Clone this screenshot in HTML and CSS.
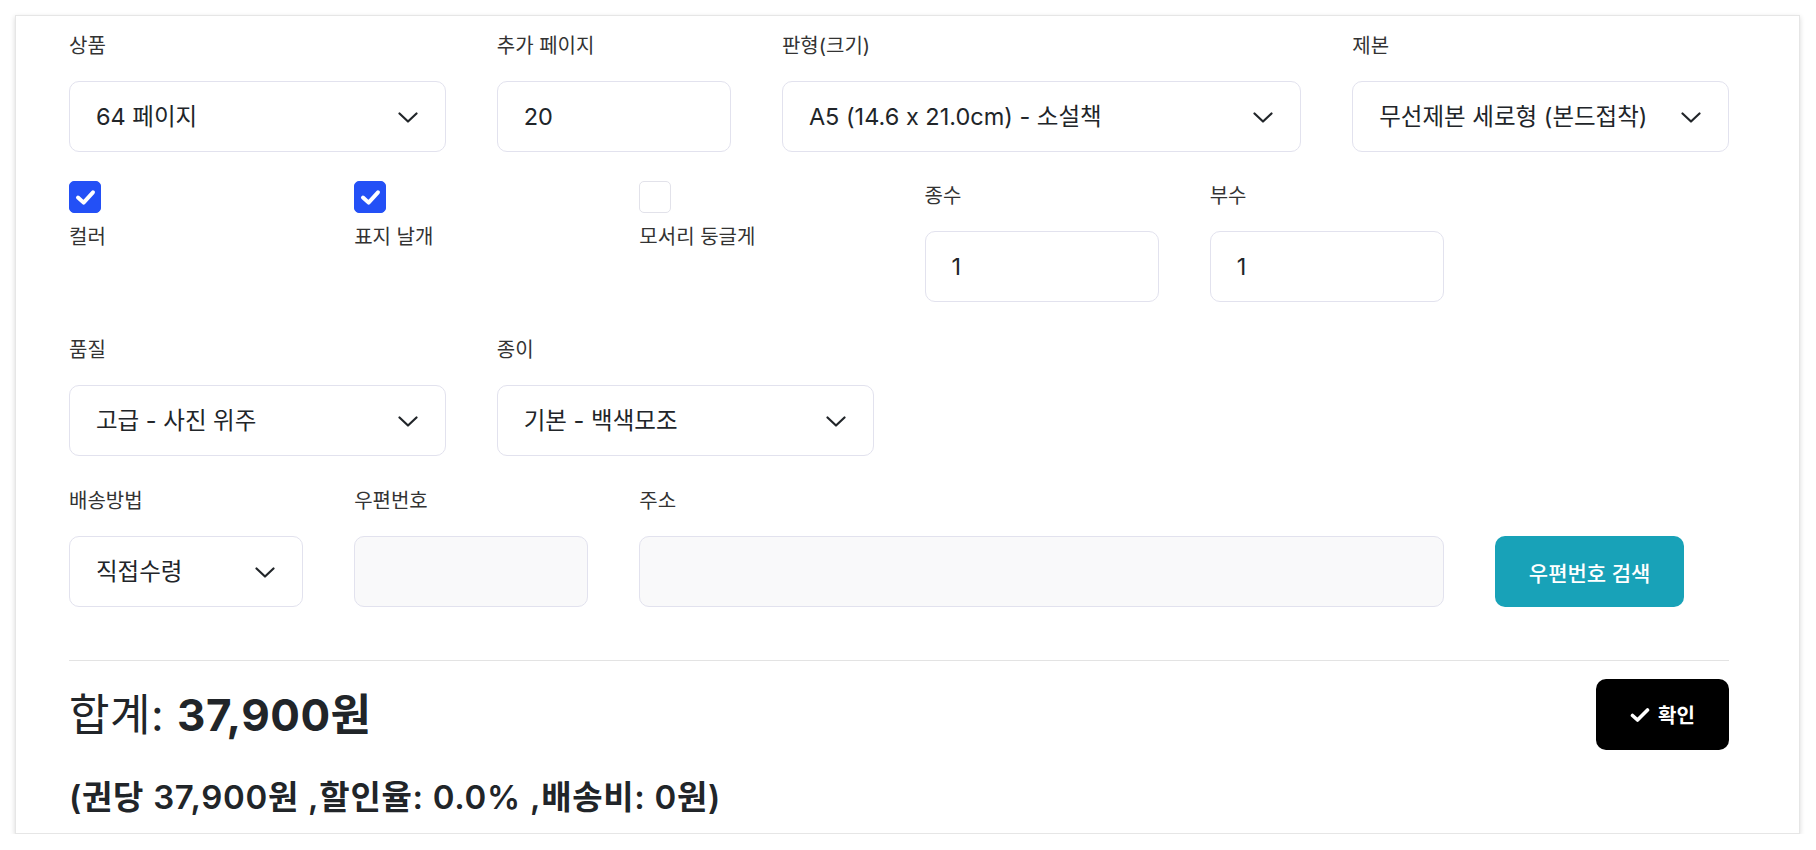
FILE: index.html
```html
<!DOCTYPE html>
<html lang="ko">
<head>
  <meta charset="UTF-8">
  <meta name="viewport" content="width=device-width, initial-scale=1.0">
  <title>책 인쇄 견적</title>
  <link rel="stylesheet" href="styles.css">
</head>
<body>
  <div class="card">
    <div class="form-row row-top">
      <div class="field span-3">
        <label class="field-label">상품</label>
        <div class="select-wrap">
          <select class="control"><option>64 페이지</option></select>
          <svg class="chevron" viewBox="0 0 20 11"><polyline points="1.5,1.5 10,9.5 18.5,1.5"/></svg>
        </div>
      </div>
      <div class="field span-2">
        <label class="field-label">추가 페이지</label>
        <input class="control" type="text" value="20">
      </div>
      <div class="field span-4">
        <label class="field-label">판형(크기)</label>
        <div class="select-wrap">
          <select class="control"><option>A5 (14.6 x 21.0cm) - 소설책</option></select>
          <svg class="chevron" viewBox="0 0 20 11"><polyline points="1.5,1.5 10,9.5 18.5,1.5"/></svg>
        </div>
      </div>
      <div class="field span-3">
        <label class="field-label">제본</label>
        <div class="select-wrap">
          <select class="control"><option>무선제본 세로형 (본드접착)</option></select>
          <svg class="chevron" viewBox="0 0 20 11"><polyline points="1.5,1.5 10,9.5 18.5,1.5"/></svg>
        </div>
      </div>
    </div>

    <div class="form-row row-options">
      <label class="check-field span-2">
        <span class="check on"><svg viewBox="0 0 32 32"><polyline points="8.5,16.5 14.5,22 24.5,11"/></svg></span>
        <span class="check-label">컬러</span>
      </label>
      <label class="check-field span-2">
        <span class="check on"><svg viewBox="0 0 32 32"><polyline points="8.5,16.5 14.5,22 24.5,11"/></svg></span>
        <span class="check-label">표지 날개</span>
      </label>
      <label class="check-field span-2">
        <span class="check"></span>
        <span class="check-label">모서리 둥글게</span>
      </label>
      <div class="field span-2">
        <label class="field-label">종수</label>
        <input class="control" type="text" value="1">
      </div>
      <div class="field span-2">
        <label class="field-label">부수</label>
        <input class="control" type="text" value="1">
      </div>
    </div>

    <div class="form-row row-paper">
      <div class="field span-3">
        <label class="field-label">품질</label>
        <div class="select-wrap">
          <select class="control"><option>고급 - 사진 위주</option></select>
          <svg class="chevron" viewBox="0 0 20 11"><polyline points="1.5,1.5 10,9.5 18.5,1.5"/></svg>
        </div>
      </div>
      <div class="field span-3">
        <label class="field-label">종이</label>
        <div class="select-wrap">
          <select class="control"><option>기본 - 백색모조</option></select>
          <svg class="chevron" viewBox="0 0 20 11"><polyline points="1.5,1.5 10,9.5 18.5,1.5"/></svg>
        </div>
      </div>
    </div>

    <div class="form-row row-delivery">
      <div class="field span-2">
        <label class="field-label">배송방법</label>
        <div class="select-wrap">
          <select class="control"><option>직접수령</option></select>
          <svg class="chevron" viewBox="0 0 20 11"><polyline points="1.5,1.5 10,9.5 18.5,1.5"/></svg>
        </div>
      </div>
      <div class="field span-2">
        <label class="field-label">우편번호</label>
        <input class="control" type="text" disabled>
      </div>
      <div class="field span-6">
        <label class="field-label">주소</label>
        <input class="control" type="text" disabled>
      </div>
      <div class="field span-2 field-action">
        <button class="search-btn">우편번호 검색</button>
      </div>
    </div>

    <hr class="divider">

    <div class="total-row">
      <h2 class="total">합계: <strong>37,900원</strong></h2>
      <button class="confirm-btn">
        <svg viewBox="0 0 20 16"><polyline points="2.5,8.5 7.5,13 17.5,3"/></svg>
        확인
      </button>
    </div>
    <p class="breakdown">(권당 37,900원 ,할인율: 0.0% ,배송비: 0원)</p>
  </div>
</body>
</html>
```

FILE: styles.css
```css
body {
  margin: 0;
  background: #fff;
  font-family: Inter, "Noto Sans CJK KR", sans-serif;
  font-feature-settings: "calt" 0;
  color: #212529;
}
.card {
  box-sizing: border-box;
  width: 1785px;
  height: 819px;
  margin: 15px 0 0 15px;
  padding: 15px 70px 16px 53px;
  border: 1px solid #e6e6e6;
  background: #fff;
  box-shadow: 0 2px 5px rgba(0,0,0,0.16);
}
.form-row {
  display: grid;
  grid-template-columns: repeat(12, 1fr);
  column-gap: 51px;
}
.row-top {
  margin-bottom: 29px;
}
.row-options {
  margin-bottom: 33px;
}
.row-paper {
  margin-bottom: 30px;
}
.span-2 { grid-column: span 2; }
.span-3 { grid-column: span 3; }
.span-4 { grid-column: span 4; }
.span-6 { grid-column: span 6; }

.field {
  display: flex;
  flex-direction: column;
}
.field-label {
  font-size: 20px;
  line-height: 30px;
  margin-bottom: 20px;
  color: #333;
}
.control {
  box-sizing: border-box;
  width: 100%;
  height: 71px;
  padding: 0 26px;
  border: 1px solid #e2e2ee;
  border-radius: 10px;
  background: #fff;
  font-family: inherit;
  font-feature-settings: "calt" 0;
  font-size: 23.5px;
  color: #212529;
  outline: none;
}
.control:disabled {
  background: #f9f9fa;
}
select.control {
  appearance: none;
  -webkit-appearance: none;
  padding-right: 60px;
}
.select-wrap {
  position: relative;
}
.chevron {
  position: absolute;
  right: 28px;
  top: 50%;
  width: 20px;
  height: 11px;
  margin-top: -5px;
  fill: none;
  stroke: #212529;
  stroke-width: 2.2;
  stroke-linecap: round;
  stroke-linejoin: round;
  pointer-events: none;
}

.check-field {
  display: flex;
  flex-direction: column;
  align-items: flex-start;
}
.check {
  box-sizing: border-box;
  width: 32px;
  height: 32px;
  border: 1px solid #e2e2ea;
  border-radius: 5px;
  background: #fff;
}
.check.on {
  background: #2350f6;
  border-color: #2350f6;
}
.check svg {
  display: block;
  width: 30px;
  height: 30px;
  fill: none;
  stroke: #fff;
  stroke-width: 4.2;
  stroke-linecap: round;
  stroke-linejoin: round;
}
.check-label {
  margin-top: 9px;
  font-size: 20px;
  line-height: 30px;
  color: #333;
}

.field-action {
  justify-content: flex-end;
  align-items: flex-start;
}
.search-btn {
  height: 71px;
  padding: 0 34px;
  border: none;
  border-radius: 10px;
  background: #18a2b8;
  color: #fff;
  font-family: inherit;
  font-size: 21px;
  font-weight: 500;
  cursor: pointer;
}

.divider {
  margin: 53px 0 0;
  border: none;
  border-top: 1px solid #e3e3e3;
}
.total-row {
  display: flex;
  justify-content: space-between;
  align-items: center;
  padding-top: 18px;
}
.total {
  margin: 0;
  font-size: 44px;
  font-weight: 400;
  letter-spacing: 0.5px;
  line-height: 50px;
  color: #212529;
}
.total strong {
  font-weight: 700;
}
.confirm-btn {
  display: flex;
  align-items: center;
  justify-content: center;
  gap: 8px;
  width: 133px;
  height: 71px;
  border: none;
  border-radius: 10px;
  background: #000;
  color: #fff;
  font-family: inherit;
  font-size: 20px;
  font-weight: 600;
  cursor: pointer;
}
.confirm-btn svg {
  width: 20px;
  height: 16px;
  fill: none;
  stroke: #fff;
  stroke-width: 3.6;
  stroke-linecap: round;
  stroke-linejoin: round;
}
.breakdown {
  margin: 27px 0 0;
  font-size: 33px;
  font-weight: 600;
  letter-spacing: 0.7px;
  line-height: 40px;
  color: #212529;
}
```
